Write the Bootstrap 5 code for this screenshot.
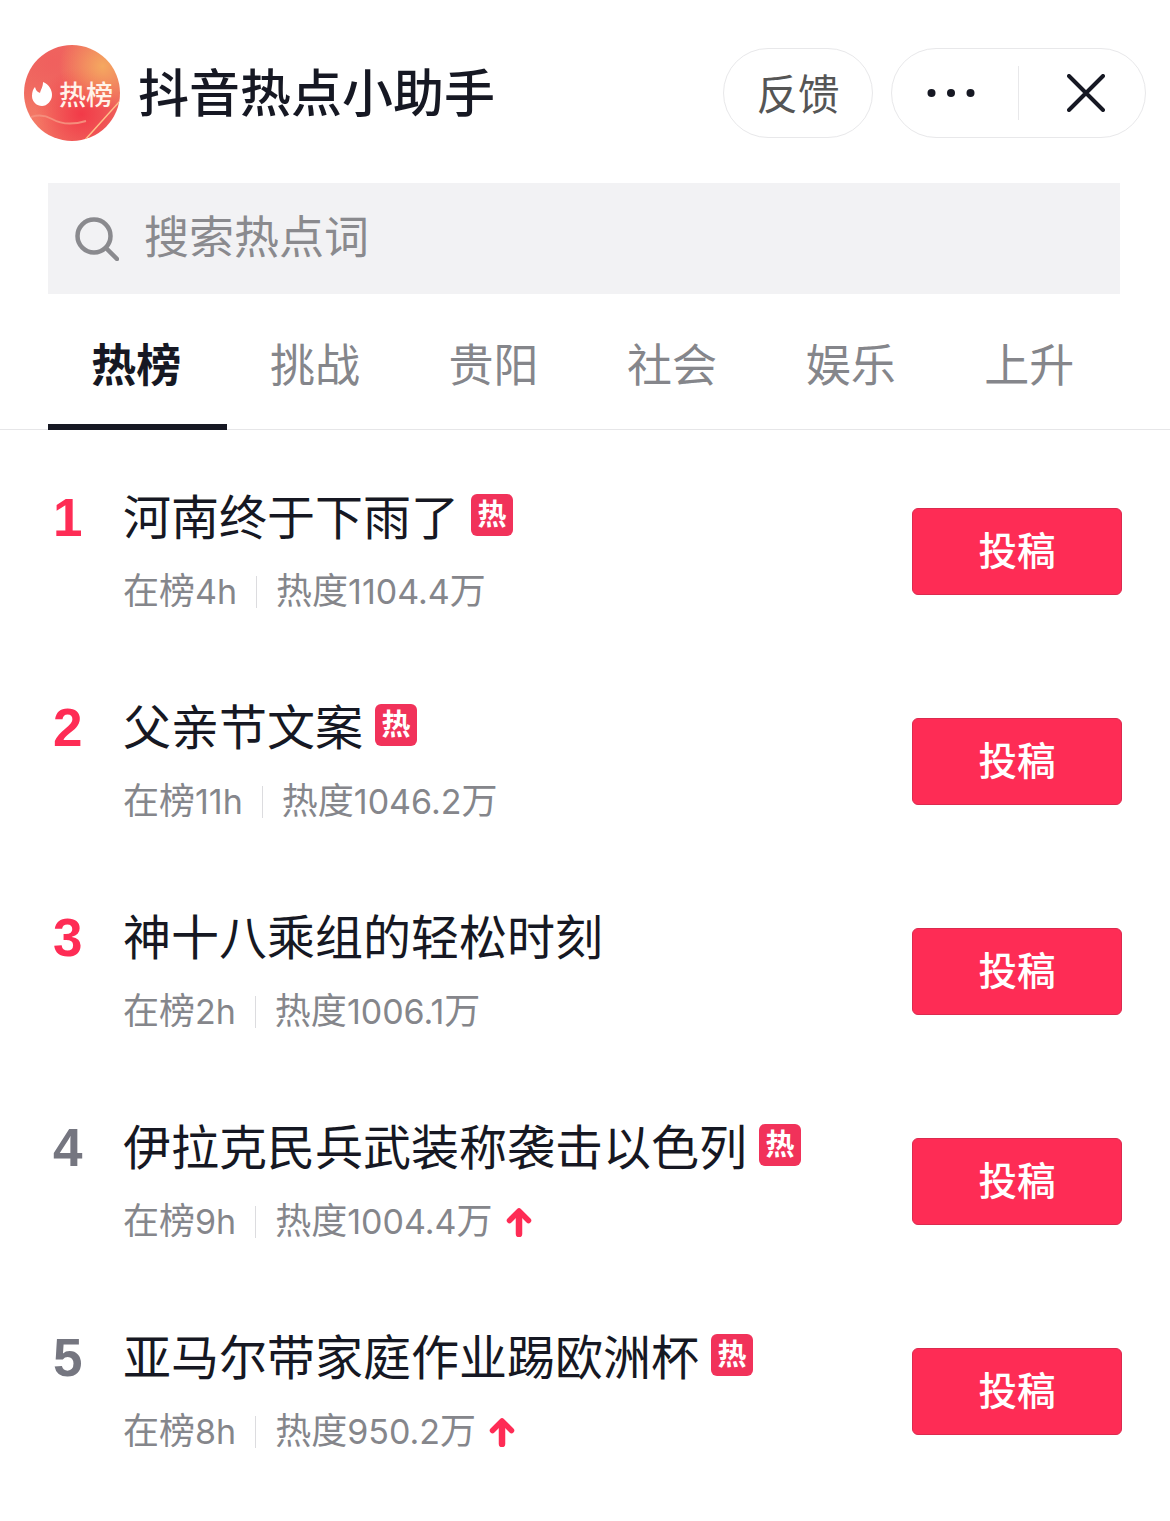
<!doctype html>
<html lang="zh-CN">
<head>
<meta charset="utf-8">
<title>抖音热点小助手</title>
<link href="https://cdn.jsdelivr.net/npm/bootstrap@5.3.0/dist/css/bootstrap.min.css" rel="stylesheet">
<style>
body{font-family:"Liberation Sans","Noto Sans CJK SC",sans-serif;background:#fff;color:#161823;width:1170px;height:1521px;overflow:hidden}
.top-bar{padding:45px 24px 0 24px;height:183px}
.app-logo{width:96px;height:96px;border-radius:50%;position:relative;overflow:hidden;flex:none;
background:radial-gradient(circle at 82% 22%,#f5a860 0,rgba(245,168,96,0) 40%),radial-gradient(circle at 60% 72%,#f23a48 0,rgba(242,58,72,0) 52%),radial-gradient(circle at 30% 18%,#f0605e 0,rgba(240,96,94,0) 50%),radial-gradient(circle at 15% 80%,#f47a66 0,rgba(244,122,102,0) 50%),#ee6a60}
.app-logo svg{position:absolute;left:0;top:0}
.logo-word{position:absolute;left:35px;top:33px;font-size:27px;font-weight:500;line-height:36px;color:#fff3ea;white-space:nowrap}
.app-title{font-size:51px;line-height:64px;font-weight:500;margin:18px 0 0 18px;color:#161823}
.pill-box{height:90px;border:1.5px solid #e8e8ea;border-radius:45px;background:#fff}
.pill-feedback{width:150px;font-size:41.5px;color:#555;padding:6px 0 0}
.pill-actions{width:255px;margin-left:18px}
.dots-cell{width:126px;padding-right:8px}
.close-cell{width:127px;padding-left:8px}
.pill-rule{width:1px;height:54px;background:#e8e8ea}
.search-box{margin:0 50px 0 48px;height:111px;background:#f2f2f4;padding-left:27px;color:#8a8a8e;font-size:45px;line-height:60px}
.search-box span{margin-left:25px}
.tab-strip{margin-top:22px;height:114px;border-bottom:1px solid #e6e6e8;padding:0 50px 0 48px;flex-wrap:nowrap}
.tab-strip .nav-link{width:178.6px;height:114px;padding:21px 2px 0 0;text-align:center;font-size:45px;line-height:60px;color:#85868b;border-bottom:6px solid transparent}
.tab-strip .nav-link.active{color:#161823;font-weight:700;border-bottom-color:#161823}
.hot-list{padding-top:16px}
.hot-row{height:210px;padding:0 48px 0 52px}
.rank-no{width:71px;padding-left:1px;font-weight:700;font-size:53px;line-height:60px;color:#757680;margin-top:-1px;align-self:flex-start}
.rank-no.top-rank{color:#fe2c55}
.hot-text{align-self:flex-start}
.hot-title{font-size:48px;line-height:60px;color:#161823;white-space:nowrap;height:60px}
.hot-tag{display:inline-block;width:42px;height:42px;margin-left:12px;border-radius:6px;background:#f1325a;color:#fff;font-size:29px;font-weight:700;line-height:42px;text-align:center;vertical-align:10px}
.hot-meta{margin-top:21px;font-size:36px;line-height:44px;color:#85868b;white-space:nowrap}
.meta-num{font-family:Inter,"Liberation Sans",sans-serif;font-size:34px}
.meta-rule{width:1px;height:32px;background:#dcdcdf;margin:0 19px}
.hot-arrow{margin-left:13px}
.hot-text-wrap{padding-top:43px}
.post-btn{width:210px;height:87px;padding:2px 0 0;border:1px solid #dc2a4e;border-radius:6px;background:#fe2c55;color:#fff;font-size:38.5px;font-weight:500;line-height:1}
.post-btn:hover{background:#fe2c55;color:#fff}
</style>
</head>
<body>
<header class="top-bar d-flex align-items-start">
  <div class="app-logo">
    <svg width="96" height="96" viewBox="0 0 96 96"><path d="M60 96L96 56" fill="none" stroke="#ffc08a" stroke-width="1.5"/><path d="M0 76Q14 66 28 74T62 76" fill="none" stroke="#f58d7c" stroke-width="2"/><path d="M11 42c1 4 3 5 5 6 1-4 3-6 3-11 6 2 9 8 9 13 0 6-5 11-10 11S8 57 8 51c0-4 1-7 3-9z" fill="#fff"/></svg>
    <span class="logo-word">热榜</span>
  </div>
  <h1 class="app-title">抖音热点小助手</h1>
  <div class="d-flex ms-auto" style="margin-top:3px">
    <button type="button" class="pill-box pill-feedback btn">反馈</button>
    <div class="pill-box pill-actions d-flex align-items-center">
      <div class="dots-cell d-flex justify-content-center">
        <svg width="52" height="10" viewBox="0 0 52 10"><circle cx="6.5" cy="5" r="4" fill="#161823"/><circle cx="26" cy="5" r="4" fill="#161823"/><circle cx="45.5" cy="5" r="4" fill="#161823"/></svg>
      </div>
      <div class="pill-rule"></div>
      <div class="close-cell d-flex justify-content-center">
        <svg width="38" height="38" viewBox="0 0 38 38"><path d="M2 2L36 36M36 2L2 36" stroke="#161823" stroke-width="4" stroke-linecap="round" fill="none"/></svg>
      </div>
    </div>
  </div>
</header>

<div class="search-box d-flex align-items-center">
  <svg width="44" height="44" viewBox="0 0 44 44"><circle cx="19" cy="19" r="16.5" fill="none" stroke="#8a8a8e" stroke-width="4.5"/><path d="M31 31L42 42" stroke="#8a8a8e" stroke-width="4.5" stroke-linecap="round"/></svg>
  <span>搜索热点词</span>
</div>

<ul class="nav tab-strip">
  <li class="nav-item"><a class="nav-link active" href="#">热榜</a></li>
  <li class="nav-item"><a class="nav-link" href="#">挑战</a></li>
  <li class="nav-item"><a class="nav-link" href="#">贵阳</a></li>
  <li class="nav-item"><a class="nav-link" href="#">社会</a></li>
  <li class="nav-item"><a class="nav-link" href="#">娱乐</a></li>
  <li class="nav-item"><a class="nav-link" href="#">上升</a></li>
</ul>

<main class="hot-list">
  <div class="hot-row d-flex align-items-center">
    <div class="hot-text-wrap d-flex flex-grow-1 align-self-start">
      <div class="rank-no top-rank">1</div>
      <div class="hot-text">
        <div class="hot-title">河南终于下雨了<span class="hot-tag">热</span></div>
        <div class="hot-meta d-flex align-items-center"><span>在榜<span class="meta-num">4h</span></span><i class="meta-rule"></i><span>热度<span class="meta-num">1104.4</span>万</span></div>
      </div>
    </div>
    <button type="button" class="btn post-btn flex-shrink-0">投稿</button>
  </div>
  <div class="hot-row d-flex align-items-center">
    <div class="hot-text-wrap d-flex flex-grow-1 align-self-start">
      <div class="rank-no top-rank">2</div>
      <div class="hot-text">
        <div class="hot-title">父亲节文案<span class="hot-tag">热</span></div>
        <div class="hot-meta d-flex align-items-center"><span>在榜<span class="meta-num">11h</span></span><i class="meta-rule"></i><span>热度<span class="meta-num">1046.2</span>万</span></div>
      </div>
    </div>
    <button type="button" class="btn post-btn flex-shrink-0">投稿</button>
  </div>
  <div class="hot-row d-flex align-items-center">
    <div class="hot-text-wrap d-flex flex-grow-1 align-self-start">
      <div class="rank-no top-rank">3</div>
      <div class="hot-text">
        <div class="hot-title">神十八乘组的轻松时刻</div>
        <div class="hot-meta d-flex align-items-center"><span>在榜<span class="meta-num">2h</span></span><i class="meta-rule"></i><span>热度<span class="meta-num">1006.1</span>万</span></div>
      </div>
    </div>
    <button type="button" class="btn post-btn flex-shrink-0">投稿</button>
  </div>
  <div class="hot-row d-flex align-items-center">
    <div class="hot-text-wrap d-flex flex-grow-1 align-self-start">
      <div class="rank-no">4</div>
      <div class="hot-text">
        <div class="hot-title">伊拉克民兵武装称袭击以色列<span class="hot-tag">热</span></div>
        <div class="hot-meta d-flex align-items-center"><span>在榜<span class="meta-num">9h</span></span><i class="meta-rule"></i><span>热度<span class="meta-num">1004.4</span>万</span>
          <svg class="hot-arrow" width="26" height="30" viewBox="0 0 26 30"><path d="M13 27V6" fill="none" stroke="#fe2c55" stroke-width="6.5" stroke-linecap="round"/><path d="M3.5 13.5L13 4L22.5 13.5" fill="none" stroke="#fe2c55" stroke-width="5.5" stroke-linecap="round" stroke-linejoin="round"/></svg>
        </div>
      </div>
    </div>
    <button type="button" class="btn post-btn flex-shrink-0">投稿</button>
  </div>
  <div class="hot-row d-flex align-items-center">
    <div class="hot-text-wrap d-flex flex-grow-1 align-self-start">
      <div class="rank-no">5</div>
      <div class="hot-text">
        <div class="hot-title">亚马尔带家庭作业踢欧洲杯<span class="hot-tag">热</span></div>
        <div class="hot-meta d-flex align-items-center"><span>在榜<span class="meta-num">8h</span></span><i class="meta-rule"></i><span>热度<span class="meta-num">950.2</span>万</span>
          <svg class="hot-arrow" width="26" height="30" viewBox="0 0 26 30"><path d="M13 27V6" fill="none" stroke="#fe2c55" stroke-width="6.5" stroke-linecap="round"/><path d="M3.5 13.5L13 4L22.5 13.5" fill="none" stroke="#fe2c55" stroke-width="5.5" stroke-linecap="round" stroke-linejoin="round"/></svg>
        </div>
      </div>
    </div>
    <button type="button" class="btn post-btn flex-shrink-0">投稿</button>
  </div>
</main>
<script src="https://cdn.jsdelivr.net/npm/bootstrap@5.3.0/dist/js/bootstrap.bundle.min.js"></script>
</body>
</html>
